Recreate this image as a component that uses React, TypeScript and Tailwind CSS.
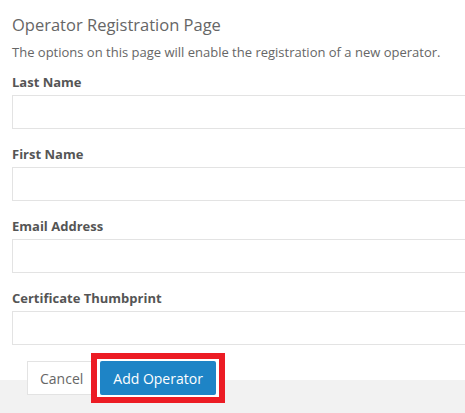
export default function App() {
  const fields = ["Last Name", "First Name", "Email Address", "Certificate Thumbprint"];

  return (
    <div className="flex h-[413px] w-full flex-col overflow-hidden bg-white font-['Open_Sans',sans-serif]">
      <div className="pl-3 pt-[14px]">
        <h1 className="text-[16.5px] leading-[22px] font-medium text-[#666]">Operator Registration Page</h1>
        <p className="mt-[7px] text-[13px] leading-[18px] text-[#666]">
          The options on this page will enable the registration of a new operator.
        </p>
        <div className="mt-[12px]">
          {fields.map((label) => (
            <div key={label} className="mb-4">
              <label className="block text-[13px] leading-[18px] font-bold text-[#555]">{label}</label>
              <input
                type="text"
                className="mt-1 block h-[34px] w-[470px] border border-[#e3e3e3] bg-white px-2 text-[13px] outline-none"
              />
            </div>
          ))}
        </div>
      </div>

      <div className="relative z-10 -mb-[15px] flex gap-1 pl-[27px]">
        <button className="h-[34px] border border-[#e3e3e3] bg-white px-[12px] text-[14px] text-[#666]">
          Cancel
        </button>
        {/* red highlight box around the primary action */}
        <span className="relative inline-flex">
          <span className="absolute -inset-x-[9px] -inset-y-[8px] border-[6px] border-[#ec1c24] bg-white" />
          <button className="relative h-[34px] rounded-[2px] bg-[#1e84c6] px-[13px] text-[14px] text-white">
            Add Operator
          </button>
        </span>
      </div>
      <div className="flex-1 bg-[#f2f2f2]" />
    </div>
  );
}
